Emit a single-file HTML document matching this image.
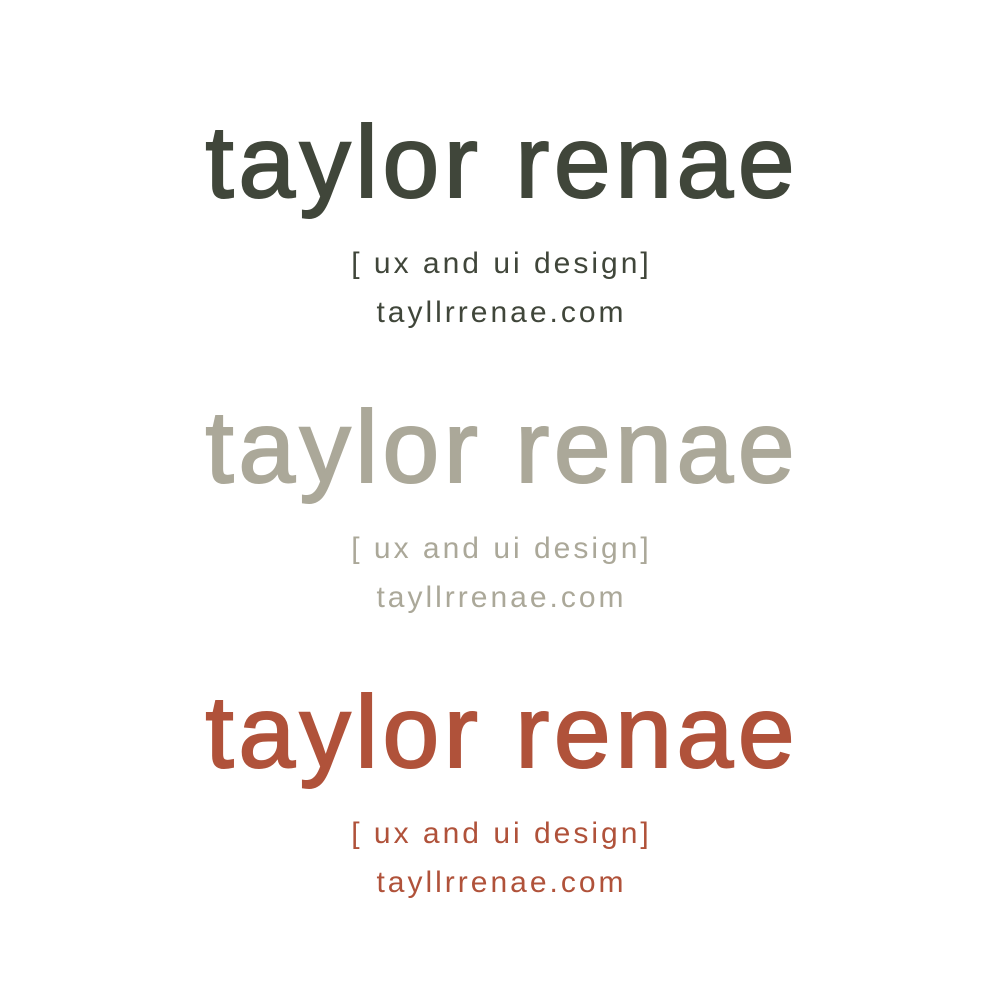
<!DOCTYPE html>
<html><head><meta charset="utf-8"><style>
html,body{margin:0;padding:0;background:#fff;width:1000px;height:1000px;overflow:hidden;position:relative}
.t{position:absolute;left:0;width:1000px;text-align:center;font-family:"Liberation Sans",sans-serif;line-height:1;white-space:nowrap}
.h{font-size:102px;letter-spacing:4.6px;text-indent:4.6px;-webkit-text-stroke:2px currentColor}
.s{font-size:30px;letter-spacing:3px;text-indent:3px}
.d{color:#40463a}.g{color:#aba899}.r{color:#b0523a}
</style></head><body>
<div class="t h d" style="top:111px">taylor renae</div>
<div class="t s d" style="top:249px">[ ux and ui design]</div>
<div class="t s d" style="top:298px">tayllrrenae.com</div>
<div class="t h g" style="top:396px">taylor renae</div>
<div class="t s g" style="top:534px">[ ux and ui design]</div>
<div class="t s g" style="top:583px">tayllrrenae.com</div>
<div class="t h r" style="top:681px">taylor renae</div>
<div class="t s r" style="top:819px">[ ux and ui design]</div>
<div class="t s r" style="top:868px">tayllrrenae.com</div>
</body></html>
